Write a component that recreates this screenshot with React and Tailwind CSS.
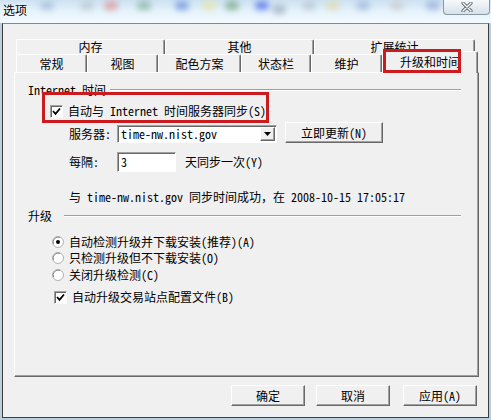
import React from "react";

const raised =
  "bg-[#f0f0f0] border border-t-white border-l-white border-r-[#696969] border-b-[#696969] shadow-[inset_-1px_-1px_0_#a0a0a0]";
const sunken =
  "bg-white border border-t-[#a0a0a0] border-l-[#a0a0a0] border-r-white border-b-white shadow-[inset_1px_1px_0_#696969]";

const blobs = [
  "left-[40px] bg-[#9fb8d8]",
  "left-[80px] bg-[#b9c3cc]",
  "left-[104px] bg-[#e08a8a]",
  "left-[137px] bg-[#7fae8f]",
  "left-[175px] bg-[#5f86d8]",
  "left-[202px] bg-[#e6e59a]",
  "left-[225px] bg-[#6fa07a]",
  "left-[255px] bg-[#3f5fe8]",
  "left-[272px] bg-[#9aa6b8] top-[5px]",
  "left-[302px] bg-[#b8c2cc]",
  "left-[326px] bg-[#e2d9a6]",
  "left-[356px] bg-[#98b0d8]",
  "left-[390px] bg-[#c8c8c8]",
  "left-[426px] bg-[#8fa6d6]",
];

const CheckBox = ({ checked }) => (
  <span className={`w-[13px] h-[13px] shrink-0 flex items-center justify-center ${sunken}`}>
    {checked && (
      <svg width="9" height="9" viewBox="0 0 9 9">
        <path d="M1 4 L3.5 6.8 L8 1.5" stroke="#000" strokeWidth="1.8" fill="none" />
      </svg>
    )}
  </span>
);

const Radio = ({ checked }) => (
  <svg width="12" height="12" viewBox="0 0 12 12" className="shrink-0">
    <circle cx="6" cy="6" r="5.5" fill="#fff" stroke="#b0b0b0" />
    <path d="M1.5 8 A5 5 0 0 1 8 1.5" stroke="#8a8a8a" fill="none" />
    {checked && <circle cx="6" cy="6" r="2" fill="#000" />}
  </svg>
);

const Button = ({ children, className = "" }) => (
  <div className={`flex items-center justify-center ${raised} ${className}`}>{children}</div>
);

const Tab = ({ label, className = "" }) => (
  <div
    className={`flex items-center justify-center rounded-t-[2px] border-t border-l border-r border-t-white border-l-white border-r-[#696969] shadow-[inset_-1px_0_0_#a0a0a0] ${className}`}
  >
    {label}
  </div>
);

const GroupHeader = ({ label, gap }) => (
  <div className="flex items-center h-[12px]">
    <span className="leading-[12px] whitespace-pre">{label}</span>
    <div className={`flex-1 h-[2px] border-t border-t-[#a0a0a0] border-b border-b-white ${gap}`} />
  </div>
);

const Row = ({ children, className = "" }) => (
  <div className={`flex items-center h-[16px] ${className}`}>{children}</div>
);

export default function App() {
  return (
    <div className="relative w-[491px] h-[420px] overflow-hidden flex flex-col bg-[#b9cfe0] text-[12px] leading-[16px] text-black font-['Noto_Sans_Mono_CJK_SC','Noto_Sans_CJK_SC',monospace]">
      {/* Title bar */}
      <div className="relative h-[23px] shrink-0 bg-linear-to-b from-[#cde2f2] via-[#e6f3fb] to-[#f2fbff]">
        {blobs.map((b, i) => (
          <span
            key={i}
            className={`absolute top-[1px] w-[14px] h-[9px] rounded-full blur-[3px] opacity-70 ${b}`}
          />
        ))}
        <span className="absolute left-[3px] top-[3px] leading-[14px] text-[12px] [text-shadow:0_0_4px_#fff]">
          选项
        </span>
        <div className="absolute right-[1px] top-0 w-[47px] h-[15px] rounded-b-[4px] border border-t-0 border-[#8c98a4] bg-linear-to-b from-[#f6f9fb] to-[#d6e1ea] flex items-center justify-center">
          <svg width="14" height="10" viewBox="0 0 14 10">
            <path d="M3 1 L11 9 M11 1 L3 9" stroke="#5f6b76" strokeWidth="3.2" strokeLinecap="round" />
            <path d="M3 1 L11 9 M11 1 L3 9" stroke="#ffffff" strokeWidth="1.4" strokeLinecap="round" />
          </svg>
        </div>
      </div>

      {/* Dialog body */}
      <div className="flex-1 mx-[2px] mb-[2px] bg-[#f0f0f0] border border-[#3d3d3d] border-t-[#7d8b96] pt-[15px] pl-[11px] pr-[9px] flex flex-col">
        {/* Tabs */}
        <div className="flex ml-[2px] h-[15px]">
          <Tab label="内存" className="w-[149px]" />
          <Tab label="其他" className="w-[149px]" />
          <Tab label="扩展统计" className="w-[161px]" />
        </div>
        <div className="flex items-end ml-[2px] h-[18px]">
          <Tab label="常规" className="w-[71px] h-[18px]" />
          <Tab label="视图" className="w-[71px] h-[18px]" />
          <Tab label="配色方案" className="w-[83px] h-[18px]" />
          <Tab label="状态栏" className="w-[70px] h-[18px]" />
          <Tab label="维护" className="w-[71px] h-[18px]" />
          <Tab label="升级和时间" className="w-[96px] h-[22px] -mb-[1px] relative z-10 bg-[#f0f0f0] pb-[1px]" />
        </div>

        {/* Panel */}
        <div className="h-[305px] shrink-0 border border-t-white border-l-white border-r-[#696969] border-b-[#696969] shadow-[inset_-1px_-1px_0_#a0a0a0] pl-[13px] pr-[17px] flex flex-col">
          <div className="mt-[11px]">
            <GroupHeader label="Internet 时间" gap="ml-[4px]" />
          </div>
          <Row className="mt-[7px] pl-[22px]">
            <CheckBox checked />
            <span className="ml-[5px] whitespace-pre">自动与 Internet 时间服务器同步(S)</span>
          </Row>

          <div className="flex items-end h-[21px] mt-[3px] pl-[41px]">
            <span className="w-[48px] h-[18px] flex items-center">服务器:</span>
            <div className={`w-[160px] h-[18px] flex items-center ${sunken}`}>
              <span className="flex-1 pl-[3px]">time-nw.nist.gov</span>
              <div className={`w-[15px] h-[14px] mr-[1px] flex items-center justify-center ${raised}`}>
                <svg width="7" height="4" viewBox="0 0 7 4">
                  <path d="M0 0 H7 L3.5 4 Z" fill="#000" />
                </svg>
              </div>
            </div>
            <Button className="ml-[8px] w-[98px] h-[21px]">立即更新(N)</Button>
          </div>

          <div className="flex items-center h-[20px] mt-[9px] pl-[41px]">
            <span className="w-[48px]">每隔:</span>
            <div className={`w-[59px] h-[20px] flex items-center pl-[3px] ${sunken}`}>3</div>
            <span className="ml-[9px]">天同步一次(Y)</span>
          </div>

          <Row className="mt-[17px] pl-[41px]">
            <span className="whitespace-pre">与 time-nw.nist.gov 同步时间成功，在 2008-10-15 17:05:17</span>
          </Row>

          <div className="mt-[5px]">
            <GroupHeader label="升级" gap="ml-[12px]" />
          </div>

          <Row className="mt-[12px] pl-[24px]">
            <Radio checked />
            <span className="ml-[5px]">自动检测升级并下载安装(推荐)(A)</span>
          </Row>
          <Row className="pl-[24px]">
            <Radio />
            <span className="ml-[5px]">只检测升级但不下载安装(O)</span>
          </Row>
          <Row className="mt-[1px] pl-[24px]">
            <Radio />
            <span className="ml-[5px]">关闭升级检测(C)</span>
          </Row>
          <Row className="mt-[6px] pl-[26px]">
            <CheckBox checked />
            <span className="ml-[5px]">自动升级交易站点配置文件(B)</span>
          </Row>
        </div>

        {/* Footer buttons */}
        <div className="flex justify-end mt-[8px] mr-[2px]">
          <Button className="w-[74px] h-[21px]">确定</Button>
          <Button className="w-[74px] h-[21px] ml-[11px]">取消</Button>
          <Button className="w-[74px] h-[21px] ml-[13px]">应用(A)</Button>
        </div>
      </div>

      {/* Red annotation boxes */}
      <div className="absolute left-[42px] top-[92px] w-[227px] h-[31px] border-[3px] border-[#cc1b1f] pointer-events-none" />
      <div className="absolute left-[383px] top-[49px] w-[78px] h-[24px] border-[3px] border-[#cc1b1f] pointer-events-none z-20" />
    </div>
  );
}
